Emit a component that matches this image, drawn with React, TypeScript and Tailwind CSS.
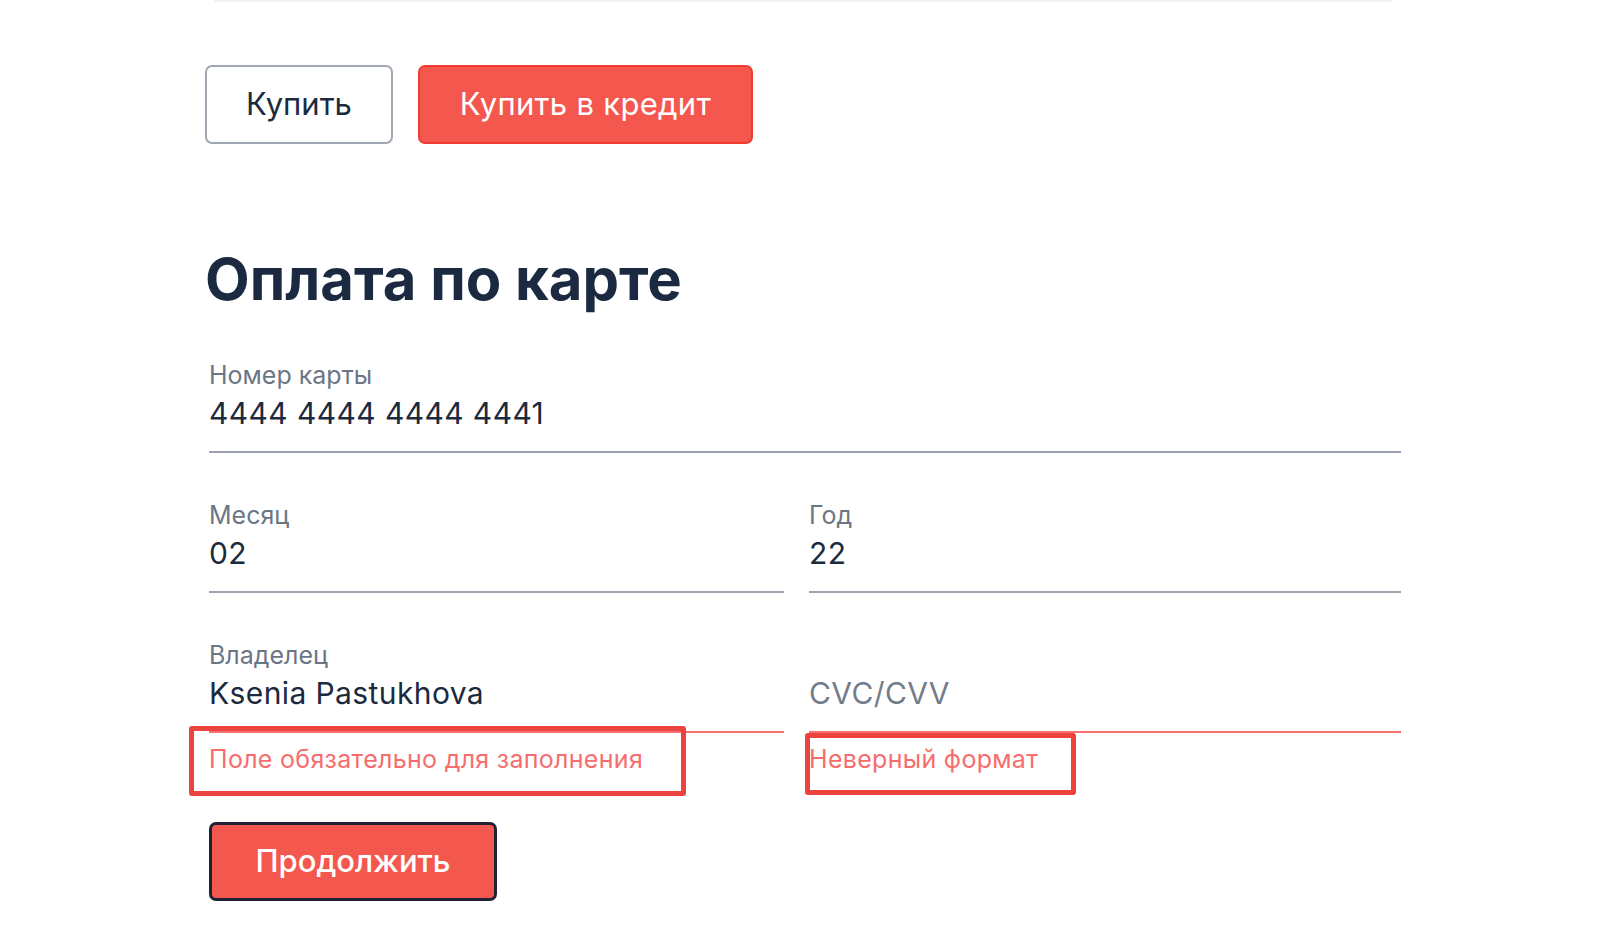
import React from "react";

function Field({
  label,
  value,
  placeholder,
  error,
}: {
  label?: string;
  value?: string;
  placeholder?: string;
  error?: boolean;
}) {
  return (
    <div
      className={
        "border-b-2 pb-[20px] " +
        (error ? "border-[#f87171]" : "border-[#9ca3af]")
      }
    >
      <div className="h-[30px] text-[25px] leading-[30px] text-[#6b7685]">
        {label}
      </div>
      <div
        className={
          "mt-[5px] h-[36px] text-[30px] leading-[36px] tracking-[0.4px] " +
          (value ? "text-[#1c2a40]" : "text-[#737c8a]")
        }
      >
        {value ?? placeholder}
      </div>
    </div>
  );
}

export default function App() {
  return (
    <div className="min-h-screen bg-white font-['Inter',sans-serif]">
      <div className="ml-[214px] h-[2px] w-[1179px] bg-[#f3f4f6]" />
      <div className="ml-[205px] w-[1196px]">
        <div className="mt-[63px] flex gap-[25px]">
          <button className="flex h-[79px] w-[188px] items-center justify-center rounded-[7px] border-2 border-[#a0a7b3] bg-white text-[31px] text-[#1c2a40]">
            Купить
          </button>
          <button className="flex h-[79px] w-[335px] items-center justify-center rounded-[7px] border-2 border-[#ee3d33] bg-[#f4574e] text-[31px] tracking-[0.3px] text-white">
            Купить в кредит
          </button>
        </div>

        <h1 className="mt-[100px] text-[58px] font-bold leading-[70px] text-[#1b2a41]">
          Оплата по карте
        </h1>

        <form className="ml-[4px] mt-[46px] w-[1192px]">
          <Field label="Номер карты" value="4444 4444 4444 4441" />

          <div className="mt-[47px] grid grid-cols-[575px_592px] gap-x-[25px]">
            <Field label="Месяц" value="02" />
            <Field label="Год" value="22" />
          </div>

          <div className="mt-[47px] grid grid-cols-[575px_592px] gap-x-[25px]">
            <div>
              <Field label="Владелец" value="Ksenia Pastukhova" error />
              <div className="relative mt-[11px] h-[30px] text-[25px] leading-[30px] tracking-[0.3px] text-[#f76c6c]">
                Поле обязательно для заполнения
                <div className="absolute left-[-20px] top-[-18px] h-[70px] w-[497px] rounded-[3px] border-[5px] border-[#ea4340]" />
              </div>
            </div>
            <div>
              <Field placeholder="CVC/CVV" error />
              <div className="relative mt-[11px] h-[30px] text-[25px] leading-[30px] tracking-[0.3px] text-[#f76c6c]">
                Неверный формат
                <div className="absolute left-[-4px] top-[-11px] h-[62px] w-[271px] rounded-[3px] border-[5px] border-[#ea4340]" />
              </div>
            </div>
          </div>

          <button
            type="button"
            className="mt-[48px] flex h-[79px] w-[288px] items-center justify-center rounded-[7px] border-[3px] border-[#1f2235] bg-[#f4574e] text-[31px] font-medium text-white"
          >
            Продолжить
          </button>
        </form>
      </div>
    </div>
  );
}
